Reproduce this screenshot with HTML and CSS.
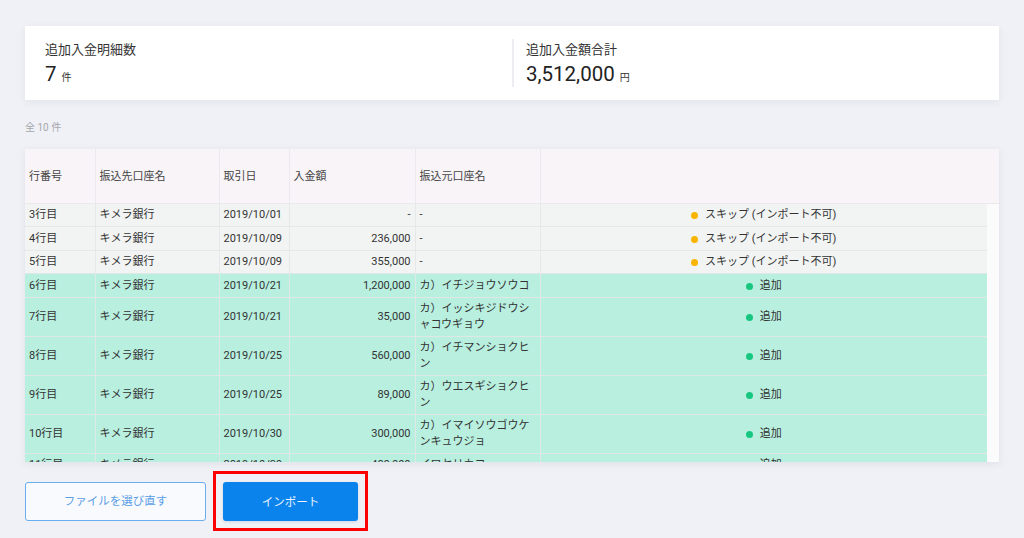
FILE: index.html
```html
<!DOCTYPE html>
<html lang="ja">
<head>
<meta charset="utf-8">
<title>インポート確認</title>
<link rel="stylesheet" href="styles.css">
</head>
<body>
<main class="page">
  <section class="summary">
    <div class="stat">
      <div class="stat-label">追加入金明細数</div>
      <div class="stat-value">7<span class="unit">件</span></div>
    </div>
    <div class="stat stat-second">
      <div class="stat-label">追加入金額合計</div>
      <div class="stat-value">3,512,000<span class="unit">円</span></div>
    </div>
  </section>

  <div class="count">全 10 件</div>

  <section class="table-card">
    <table class="grid head">
      <colgroup><col class="c1"><col class="c2"><col class="c3"><col class="c4"><col class="c5"><col></colgroup>
      <thead>
        <tr><th>行番号</th><th>振込先口座名</th><th>取引日</th><th>入金額</th><th>振込元口座名</th><th></th></tr>
      </thead>
    </table>
    <div class="body-wrap">
      <table class="grid body">
        <colgroup><col class="c1"><col class="c2"><col class="c3"><col class="c4"><col class="c5"><col></colgroup>
        <tbody>
          <tr class="skip"><td>3行目</td><td>キメラ銀行</td><td>2019/10/01</td><td class="num">-</td><td>-</td><td class="st"><span class="dot y"></span>スキップ (インポート不可)</td></tr>
          <tr class="skip"><td>4行目</td><td>キメラ銀行</td><td>2019/10/09</td><td class="num">236,000</td><td>-</td><td class="st"><span class="dot y"></span>スキップ (インポート不可)</td></tr>
          <tr class="skip"><td>5行目</td><td>キメラ銀行</td><td>2019/10/09</td><td class="num">355,000</td><td>-</td><td class="st"><span class="dot y"></span>スキップ (インポート不可)</td></tr>
          <tr class="add"><td>6行目</td><td>キメラ銀行</td><td>2019/10/21</td><td class="num">1,200,000</td><td>カ）イチジョウソウコ</td><td class="st"><span class="dot g"></span>追加</td></tr>
          <tr class="add"><td>7行目</td><td>キメラ銀行</td><td>2019/10/21</td><td class="num">35,000</td><td>カ）イッシキジドウシャコウギョウ</td><td class="st"><span class="dot g"></span>追加</td></tr>
          <tr class="add"><td>8行目</td><td>キメラ銀行</td><td>2019/10/25</td><td class="num">560,000</td><td>カ）イチマンショクヒン</td><td class="st"><span class="dot g"></span>追加</td></tr>
          <tr class="add"><td>9行目</td><td>キメラ銀行</td><td>2019/10/25</td><td class="num">89,000</td><td>カ）ウエスギショクヒン</td><td class="st"><span class="dot g"></span>追加</td></tr>
          <tr class="add"><td>10行目</td><td>キメラ銀行</td><td>2019/10/30</td><td class="num">300,000</td><td>カ）イマイソウゴウケンキュウジョ</td><td class="st"><span class="dot g"></span>追加</td></tr>
          <tr class="add"><td>11行目</td><td>キメラ銀行</td><td>2019/10/30</td><td class="num">480,000</td><td>イワセリカコ</td><td class="st"><span class="dot g"></span>追加</td></tr>
          <tr class="add"><td>12行目</td><td>キメラ銀行</td><td>2019/10/31</td><td class="num">848,000</td><td>カ）オオタショウジ</td><td class="st"><span class="dot g"></span>追加</td></tr>
        </tbody>
      </table>
    </div>
  </section>

  <div class="actions">
    <button class="btn btn-outline" type="button">ファイルを選び直す</button>
    <div class="highlight">
      <button class="btn btn-primary" type="button">インポート</button>
    </div>
  </div>
</main>
</body>
</html>
```

FILE: styles.css
```css
* { box-sizing: border-box; }
html, body { margin: 0; padding: 0; }
body {
  background: #f0f1f6;
  font-family: Roboto, "Noto Sans CJK JP", "Noto Sans", sans-serif;
  color: #333;
  width: 1024px;
  height: 538px;
  overflow: hidden;
}
.page {
  padding: 26px 25px 0 25px;
}
.summary {
  display: flex;
  background: #fff;
  height: 74px;
  box-shadow: 0 2px 8px rgba(40, 50, 90, 0.07);
  padding: 15px 0 0 0;
}
.stat {
  flex: 0 0 50%;
  padding-left: 20px;
}
.stat-second {
  border-left: 2px solid #eceef2;
  padding-left: 12px;
  height: 48px;
  margin-top: -2px;
  padding-top: 2px;
}
.stat-label {
  font-size: 13px;
  line-height: 18px;
  color: #333;
}
.stat-value {
  font-size: 20.5px;
  line-height: 28px;
  color: #222;
  margin-top: 1px;
}
.unit {
  font-size: 10px;
  margin-left: 5px;
  color: #333;
}
.count {
  font-size: 10px;
  color: #a5a7ad;
  margin-top: 22px;
  line-height: 12px;
}
.table-card {
  margin-top: 15px;
  height: 313px;
  overflow: hidden;
  background: #fbfbfc;
  box-shadow: 0 2px 8px rgba(40, 50, 90, 0.08);
}
.grid {
  border-collapse: collapse;
  table-layout: fixed;
  font-size: 11px;
  line-height: 15.5px;
}
.head { width: 100%; }
.body-wrap { padding-right: 12px; }
.body { width: 100%; }
.c1 { width: 70px; }
.c2 { width: 124px; }
.c3 { width: 70px; }
.c4 { width: 126px; }
.c5 { width: 125px; }
.head th {
  background: #f8f4f8;
  height: 54px;
  font-weight: 400;
  text-align: left;
  color: #444;
  padding: 2px 4px 0 4px;
  border-right: 1px solid #ebe8ee;
  border-bottom: 1px solid #ebe8ee;
}
.head th:last-child { border-right: none; }
.body td {
  padding: 3.5px 4px;
  vertical-align: middle;
  border-right: 1px solid #e6e7e9;
  border-top: 1px solid #e6e7e9;
  color: #333;
  word-break: break-all;
}
.body tr:first-child td { border-top: none; }
.body td:last-child { border-right: none; }
.skip td { background: #f2f4f3; }
.add td { background: #b8efdf; border-color: #e0e8e6; }
.num { text-align: right; }
.st { text-align: center; }
.dot {
  display: inline-block;
  width: 7px;
  height: 7px;
  border-radius: 50%;
  margin-right: 7px;
  vertical-align: -1px;
}
.dot.y { background: #f7b500; }
.dot.g { background: #17c77f; }
.actions {
  display: flex;
  align-items: center;
  margin-top: 9px;
}
.btn {
  font-family: Roboto, "Noto Sans CJK JP", sans-serif;
  font-size: 11.5px;
  line-height: 16px;
  height: 39px;
  border-radius: 3px;
  cursor: pointer;
  padding: 0;
}
.btn-outline {
  width: 181px;
  background: #f9fafd;
  border: 1px solid #6aaef0;
  color: #5b9ee6;
}
.highlight {
  margin-left: 7px;
  border: 3px solid #f00;
  padding: 8px 7px 7px 7px;
}
.btn-primary {
  display: block;
  width: 135px;
  background: #0a84ec;
  border: none;
  color: #eaf3fd;
  box-shadow: 0 1px 3px rgba(0, 60, 140, 0.15);
}
```
